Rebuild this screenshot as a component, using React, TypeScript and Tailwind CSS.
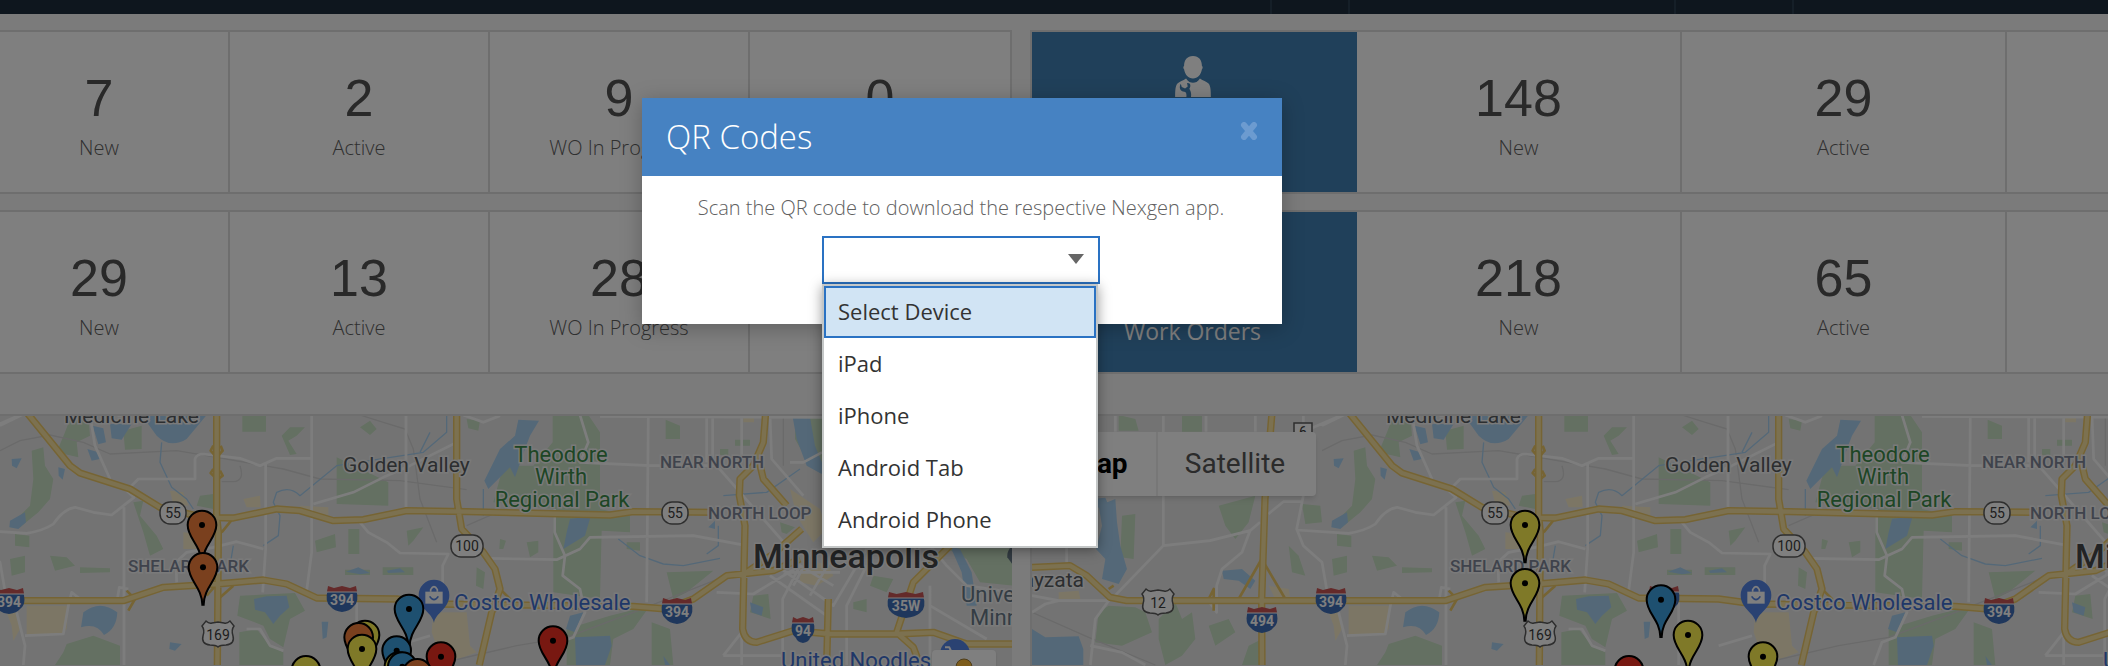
import React from "react";

type Stat = { value?: string; label?: string };

const navDividers = ["w-[1272px]", "w-[78px]", "w-[326px]", "w-[118px]"];

const rows: { left: Stat[]; right: Stat[]; title?: string }[] = [
  {
    left: [
      { value: "7", label: "New" },
      { value: "2", label: "Active" },
      { value: "9", label: "WO In Progress" },
      { value: "0" },
    ],
    right: [{ value: "148", label: "New" }, { value: "29", label: "Active" }, {}],
  },
  {
    left: [
      { value: "29", label: "New" },
      { value: "13", label: "Active" },
      { value: "28", label: "WO In Progress" },
      {},
    ],
    right: [{ value: "218", label: "New" }, { value: "65", label: "Active" }, {}],
    title: "Work Orders",
  },
];

function TechnicianIcon() {
  return (
    <svg viewBox="0 0 108 124" className="h-[41px] w-9 fill-white" aria-hidden="true">
      <path d="M54 0C36 0 27 13 27 30c-3 0-3 8 0 10 3 17 13 28 27 28s24-11 27-28c3-2 3-10 0-10C81 13 72 0 54 0Z" />
      <path d="M33 68c6 10 14 13 21 13s15-3 21-13c9 7 20 9 26 15 7 8 7 25 7 41H0c0-16 0-33 7-41 6-6 17-8 26-15Z" />
      <path
        d="M17 84C10 96 16 108 28 108C34 109 35 116 34 124H48C50 112 46 104 43 99C49 90 46 80 36 82L38 92L30 98L20 94Z"
        className="fill-[#4080b4]"
      />
    </svg>
  );
}

function StatCell({ value, label }: Stat) {
  return (
    <div className="flex h-40 flex-col items-center border-r-2 border-[#dcdcdc] bg-white pt-10 last:border-r-0">
      <span className="font-['Liberation_Sans',Arial,sans-serif] text-[52px] leading-[52px] text-[#525252]">{value}</span>
      <span className="mt-2 text-xl leading-8 font-light text-[#606060]">{label}</span>
    </div>
  );
}

function StatRow({ stats, title, columns }: { stats: Stat[]; title?: string; columns: string }) {
  return (
    <section className={`grid border-2 border-[#dcdcdc] ${columns}`}>
      <div className="flex h-40 flex-col items-center bg-[#4080b4] pt-6 pr-1">
        <TechnicianIcon />
        <span className="mt-[38px] text-[23px] leading-8 text-white">{title}</span>
      </div>
      {stats.map((s, i) => (
        <StatCell key={i} {...s} />
      ))}
    </section>
  );
}

const parks = [
  "M215 48L265 48L270 110L230 130L235 175L170 160L195 100Z",
  "M727 48H798V98H727Z",
  "M870 85L915 85L890 110L865 125L890 165L870 168L845 110Z",
  "M1080 85L1110 65L1130 90L1110 108Z",
  "M1010 175L1165 250L1165 320L1010 315Z",
  "M370 95L425 80V150L375 152Z",
  "M95 155L130 145L135 200L160 240L150 300L115 340L60 385L40 370L90 320L100 240Z",
  "M45 405L88 410V445L45 440Z",
  "M30 480L75 470V520L35 530Z",
  "M240 505L330 508V520L240 522Z",
  "M400 310L430 305L420 350L470 410L490 450L450 470L430 400Z",
  "M600 290L640 285V330L590 320Z",
  "M945 425L1005 405L1008 445L950 460Z",
  "M1045 390H1078V465H1045Z",
  "M1220 395L1270 385L1240 425L1225 440Z",
  "M720 590L885 582L915 635L870 660L850 745L810 720L790 680L712 650Z",
  "M718 700L770 690L810 740L850 760V798H718Z",
  "M190 760L200 735L280 710L360 740V798H165Z",
  "M1035 512H1110V528H1035Z",
  "M1148 505H1240V528H1148Z",
  "M1400 60L1440 65L1435 95L1405 88Z",
  "M1658 48H1765L1800 100L1800 330L1890 350L1890 400L1805 395L1800 600L1660 580L1660 330L1480 310L1510 200L1600 200L1658 130Z",
  "M1997 62L2040 80V120H1997Z",
  "M2205 122H2250V140H2205Z",
  "M2160 150H2185V168H2160Z",
  "M2385 48H2480V230L2430 200L2385 120Z",
  "M1500 420L1518 425L1510 450H1498Z",
  "M1580 430L1615 425V460L1590 475Z",
  "M1430 505L1455 520L1450 570L1428 560Z",
  "M1880 430H1920V455L1880 450Z",
  "M2000 520L2140 515L2060 580L2020 600Z",
  "M1700 690L1830 650L1950 620L1900 690L1840 720L1830 798H1700Z",
  "M1955 670L2010 690L2020 798H1955Z",
  "M2260 590L2305 585L2312 660L2250 640Z",
  "M2340 370L2385 385L2360 405L2345 400Z",
  "M2620 530L2680 540L2660 580L2610 560Z",
  "M2840 448H3040V560L2940 550L2900 480Z",
  "M2560 610L2600 600V640L2560 630Z",
  "M-610 48L-560 60L-550 95H-610Z",
  "M-420 48H-360V98H-420Z",
  "M-310 320L-200 290L-220 370L-260 420L-290 380Z",
  "M-600 350L-560 345L-565 480L-605 475Z",
  "M-100 440L-70 470L-50 530L-90 520Z",
  "M-670 640L-640 620L-560 625L-530 640L-510 700L-600 740L-680 730Z",
  "M-490 660L-440 610L-420 660L-390 640L-380 720L-420 770L-470 798L-490 720Z",
  "M-340 680L-280 660L-260 700L-320 740Z",
  "M-220 740L-180 720V798H-240Z",
  "M-60 315L-5 320L0 370L-50 375Z",
  "M150 470L200 475L225 500L165 515Z",
];

const waters = [
  "M425 48L470 110Q510 150 560 120L620 48Z",
  "M330 75L395 75L365 122L335 118Z",
  "M278 80L310 88L318 130L295 136Z",
  "M262 150L295 160L300 180L275 185Z",
  "M35 180L65 178L50 208L36 200Z",
  "M175 205L195 210L188 242L176 230Z",
  "M30 365L75 340L78 370L55 390L28 385Z",
  "M250 640Q300 600 352 640Q350 690 312 708Q290 670 243 685Z",
  "M762 600L800 592L860 590L868 625L840 650L820 675L795 640L765 632Z",
  "M510 730L545 735L525 755L508 750Z",
  "M965 668L985 668L980 715L968 720Z",
  "M1555 62L1617 65L1590 110L1575 150L1545 235L1530 205L1465 270L1453 245L1500 150L1545 110Z",
  "M1710 360L1772 352L1755 410L1690 450L1700 400Z",
  "M1725 715L1830 710L1835 740L1815 798H1728Z",
  "M1710 650L1750 640L1725 700L1698 690Z",
  "M2378 55L2430 55L2445 140L2470 200L2465 225L2420 200L2390 120Z",
  "M2850 440L2880 450L2915 520L2930 620L2900 620L2885 520Z",
  "M2250 610L2290 625L2285 650L2255 640Z",
  "M1038 518L1075 505L1110 522L1080 526Z",
  "M1160 515L1200 508L1215 520L1165 522Z",
  "M-670 320L-620 300L-615 370L-605 440L-585 510L-610 555L-660 540L-650 480L-678 450L-660 380Z",
  "M-870 690L-830 715L-730 712L-716 750V798H-870Z",
  "M-300 515L-240 510L-200 545L-215 570L-250 545L-295 540Z",
  "M-690 300L-650 296L-640 320L-660 340Z",
  "M1990 770L2010 798H1995Z",
  "M2125 385L2145 365V390Z",
];

const beiges = [
  "M80 620L205 620L200 690L185 705L80 708Z",
  "M510 275L550 280L565 320L520 315Z",
  "M730 300L780 290L782 325L740 325Z",
  "M900 320L985 325V348L900 340Z",
  "M550 400L600 405L590 450L550 450Z",
  "M20 640L50 640L60 690L40 725L35 680Z",
  "M1300 640L1400 640L1410 740L1430 760L1330 798L1295 700Z",
  "M-160 560L-100 570L-95 600L-140 600Z",
  "M-790 580L-730 575L-725 600L-790 600Z",
  "M2400 500L2480 490L2500 530L2450 560L2400 550Z",
  "M2370 270L2460 330L2480 390L2440 430L2390 350Z",
  "M2230 50H2262V70H2230Z",
];

const whiteRoads = [
  "M935 48V460L920 575",
  "M797 195V450L788 580",
  "M-76 393L80 403Q130 395 160 375Q190 330 225 325L280 340L335 348L402 295L380 275L415 240H585V180Q590 165 610 165L720 178L780 200L830 178H935",
  "M270 48L285 140L330 240",
  "M0 80L65 48",
  "M372 325V798",
  "M1218 48V325",
  "M940 315L1060 280L1150 235L1230 200L1370 130",
  "M1080 370L1105 400L1160 430L1200 462L1345 465L1328 500V560",
  "M530 550L528 490L560 460L640 445L710 428L790 450",
  "M-56 290L-76 390L-56 440L0 490L14 570",
  "M50 640L75 740L70 798M75 710L190 705L205 620L215 580L240 600",
  "M352 600L358 565L385 570",
  "M1460 478L1670 482L1740 450L1770 415L2080 410L2240 440",
  "M1945 48L1940 610",
  "M1740 48L1765 130L1740 190L1950 200H2150L2290 360L2360 440",
  "M1664 330V400L1695 470L1688 530L1740 570L1755 640L1720 715L1680 730L1655 798",
  "M1390 48L1450 70L1500 50M1800 52L2480 55",
  "M2120 48V190M2138 48V190M2225 48V190",
  "M2310 48L2315 180L2410 290M2370 190H2410L2466 160",
  "M2150 580L2260 585L2400 500",
  "M2170 770H2350M2170 770L2225 700V798",
  "M2348 798V600L2400 500L2500 560",
  "M2330 500L2500 620L2600 450M2310 530L2480 650M2380 560L2440 450M2430 590L2500 470M2350 520L2520 520",
  "M2540 798V620L2600 500",
  "M2790 440L2840 500L2900 560L3036 580M2790 560V798M2790 620L2960 720",
  "M740 690H780L810 740L850 755",
  "M1070 600V798M1190 740L1290 710",
  "M-766 440V495M-476 48V440",
  "M-621 590L-476 440L-336 425L-216 395L-186 370",
  "M-216 395L-240 460L-300 510L-316 560V640L-345 600",
  "M-161 345L-116 308H-56",
  "M-870 590L-790 605H-640L-680 660L-695 798",
  "M-870 640L-830 615L-790 605M-695 740L-600 760L-530 798",
  "M-620 48V98M-348 48V98M-200 48V98M-56 48V98L60 48",
];

const rails = [
  "M0 155L60 125L150 108L250 130L330 165L530 155L620 170L850 210L960 240L1200 245L1400 272",
  "M720 200Q735 245 700 248H665M1080 48L1150 70L1215 90L1240 150L1260 300L1310 430",
  "M1400 380L1560 310M2350 48V200M1300 798L1550 740L1700 715L1900 640L2180 530",
  "M-870 640L-700 715L-500 798",
];

const streams = [
  "M485 130L480 190L515 265L560 300L580 330",
  "M1340 48V100L1270 160L1010 200L900 290Q870 260 830 280L820 310L840 350L835 410L790 440",
  "M1290 100L1260 160M1855 420L1920 470L1990 495L2050 500L2160 478",
  "M2170 290L2300 280L2400 210M2155 380V440L2120 465M1450 270V350M700 440L690 500",
];

const highways = [
  "M-870 505L-756 500L-706 530L-636 595L-586 605H370L490 565L650 555L790 543L860 555L950 597L1190 600L1300 615L1900 622L2000 630L2080 600L2180 530L2320 515L2400 480",
  "M80 40L210 200L240 222L390 270L480 325L610 355L700 357L830 330L900 335L1000 365L1090 362L1220 335L1400 338L1700 345L1830 348L1900 338L2160 340",
  "M650 40V350L655 400L652 798",
  "M1370 40V300L1385 390L1450 460L1485 510L1500 570L1475 640L1438 798",
  "M-150 40L-171 300L-181 605L-180 798",
  "M2297 40L2290 130L2260 200L2220 240L2218 290L2235 380L2228 690Q2235 730 2270 730L2380 695L2490 705H2690L2800 700L2900 735H3036",
  "M2278 190L2290 240L2360 320M2405 390L2320 465L2240 520",
  "M2850 440L2740 550L2710 640L2690 700L2740 745L2760 798M2485 600L2480 798",
];

const ramps = [
  "M-181 480L-250 600M-181 480L-110 600M655 550L620 590M655 600L700 560M700 357L665 400",
  "M380 575L405 600L385 635M1480 640L1530 600L1490 560M-640 570L-625 560M-340 600L-325 570V635",
  "M640 140L632 155L645 170M662 140L668 155L655 170M640 210L632 222L645 235M660 215L668 230L655 240",
];

type Point = [number, number];

function Interstate({ at: [x, y], children, w = 16 }: { at: Point; children: string; w?: number }) {
  return (
    <g transform={`translate(${x} ${y})`}>
      <path
        d={`M${-w + 2} -10H${w - 2}Q${w + 2} 3 ${w - 5} 8Q${w / 2} 12 0 13Q${-w / 2} 12 ${-w + 5} 8Q${-w - 2} 3 ${-w + 2} -10Z`}
        fill="#3f6fb8"
      />
      <path d={`M${-w + 1} -7L${-w + 2} -13L${-w / 2} -11L0 -13L${w / 2} -11L${w - 2} -13L${w - 1} -7Z`} fill="#c95555" />
      <path d={`M${-w + 1} -7H${w - 1}`} stroke="#fff" strokeWidth="1" />
      <text y="6" textAnchor="middle" className="fill-white text-[14px] font-bold">
        {children}
      </text>
    </g>
  );
}

function StateRoute({ at: [x, y], children, w = 26 }: { at: Point; children: string; w?: number }) {
  return (
    <g transform={`translate(${x} ${y})`}>
      <rect x={-w / 2} y="-11" width={w} height="22" rx="10" className="fill-white stroke-[#5c5c5c]" strokeWidth="1.5" />
      <text y="5" textAnchor="middle" className="fill-[#3c3c3c] text-[14px]">
        {children}
      </text>
    </g>
  );
}

function UsRoute({ at: [x, y], children }: { at: Point; children: string }) {
  return (
    <g transform={`translate(${x} ${y})`}>
      <path
        d="M-12 -13Q-9 -10 -6 -11L0 -12L6 -11Q9 -10 12 -13L16 -8Q13 -4 15 2Q17 10 8 11Q2 11 0 13Q-2 11 -8 11Q-17 10 -15 2Q-13 -4 -16 -8Z"
        className="fill-white stroke-[#5c5c5c]"
        strokeWidth="1.5"
      />
      <text y="6" textAnchor="middle" className="fill-[#3c3c3c] text-[14px]">
        {children}
      </text>
    </g>
  );
}

const pinColors = { orange: "#f4803c", yellow: "#fff250", blue: "#3ca0e0", red: "#f03022" };
type Pin = [keyof typeof pinColors, number, number];

const leftPins: Pin[] = [
  ["orange", 606, 378],
  ["orange", 609, 505],
  ["yellow", 1095, 708],
  ["orange", 1076, 715],
  ["yellow", 1086, 750],
  ["blue", 1227, 630],
  ["blue", 1190, 755],
  ["yellow", 1197, 803],
  ["blue", 1207, 803],
  ["red", 1323, 773],
  ["orange", 1252, 823],
  ["yellow", 918, 814],
  ["red", 1659, 725],
];

const rightPins: Pin[] = [
  ["yellow", 609, 378],
  ["yellow", 609, 553],
  ["blue", 1017, 602],
  ["yellow", 1098, 708],
  ["red", 921, 814],
  ["yellow", 1323, 773],
];

function CityMap({ pins, label }: { pins: Pin[]; label: string }) {
  const halo = "stroke-[#f4f4f4] [paint-order:stroke] [stroke-width:3px]";
  return (
    <svg role="img" aria-label={label} className="block h-[250px] w-full bg-[#e7e7e7] font-[Roboto,sans-serif]">
      <g transform="translate(290 -17)">
        <g transform="scale(0.33333)" fill="none" strokeLinejoin="round">
          <path d={parks.join("")} fill="#c8e0c4" />
          <path d={beiges.join("")} fill="#f8edcb" />
          <path d={waters.join("")} fill="#a9d1f0" />
          <path d={rails.join("")} stroke="#d4d4d4" strokeWidth="4" />
          <path d={streams.join("")} stroke="#a9d1f0" strokeWidth="4" />
          <path d={whiteRoads.join("")} stroke="#fbfbfb" strokeWidth="8" />
          <path d={ramps.join("")} stroke="#edc968" strokeWidth="8" />
          <path d={highways.join("")} stroke="#edc968" strokeWidth="22" />
          <path d={highways.join("")} stroke="#f8e3a0" strokeWidth="13" />
          <g transform="translate(1302 590)">
            <path d="M0 82C-5 50 -46 40 -46 -2A46 46 0 1 1 46 -2C46 40 5 50 0 82Z" fill="#5585e5" />
            <path d="M-26 -12H26V24H-26Z" fill="#fff" />
            <path d="M-10 -12V-18Q0 -36 10 -18V-12" stroke="#fff" strokeWidth="5" />
            <path d="M-13 2Q0 22 13 2" stroke="#5585e5" strokeWidth="5" />
          </g>
          <circle cx="2865" cy="765" r="45" fill="#5585e5" />
          <path d="M2835 745H2848L2856 762H2895L2888 775H2855" stroke="#fff" strokeWidth="6" />
          <path d="M3040 440Q3020 450 3022 475L3040 500Z" fill="#657784" />
        </g>
        <g className={halo}>
          <g className="fill-[#585c60] text-[21px]">
            <text x="64" y="24">Medicine Lake</text>
            <text x="343" y="73">Golden Valley</text>
            <text x="-238" y="188" textAnchor="end">Wayzata</text>
          </g>
          <g className="fill-[#3c8c4a] text-[22px]" textAnchor="middle">
            <text x="561" y="63">Theodore</text>
            <text x="561" y="85">Wirth</text>
            <text x="562" y="108">Regional Park</text>
          </g>
          <g className="fill-[#7f8698] text-[17px] font-medium">
            <text x="660" y="69">NEAR NORTH</text>
            <text x="708" y="120">NORTH LOOP</text>
            <text x="128" y="173">SHELARD PARK</text>
          </g>
          <text x="753" y="169" className="fill-[#444648] text-[34px] font-medium">Minneapolis</text>
          <g className="fill-[#687a88] text-[22px]">
            <text x="961" y="203">University of</text>
            <text x="970" y="226">Minnesota</text>
          </g>
          <g className="fill-[#3f6fd0] text-[22px]">
            <text x="454" y="211">Costco Wholesale</text>
            <text x="781" y="269">United Noodles</text>
          </g>
        </g>
        <Interstate at={[9, 202]}>394</Interstate>
        <Interstate at={[342, 200]}>394</Interstate>
        <Interstate at={[677, 212]}>394</Interstate>
        <Interstate at={[803, 231]} w={12}>94</Interstate>
        <Interstate at={[906, 206]} w={19}>35W</Interstate>
        <Interstate at={[-60, 221]}>494</Interstate>
        <StateRoute at={[173, 114]}>55</StateRoute>
        <StateRoute at={[675, 114]}>55</StateRoute>
        <StateRoute at={[467, 147]} w={32}>100</StateRoute>
        <UsRoute at={[218, 235]}>169</UsRoute>
        <UsRoute at={[-164, 203]}>12</UsRoute>
        <rect x="-28" y="24" width="18" height="16" className="fill-white stroke-[#5c5c5c]" strokeWidth="1.5" />
        <text x="-19" y="38" textAnchor="middle" className="fill-[#3c3c3c] text-[14px]">6</text>
        <g transform="scale(0.33333)">
          {pins.map(([color, x, y], i) => (
            <g key={i} transform={`translate(${x} ${y})`}>
              <path
                d="M-2 112C-3 60 -43 40 -43 0A43 43 0 1 1 43 0C43 40 3 60 2 112Z"
                fill={pinColors[color]}
                stroke="#000"
                strokeWidth="6"
              />
              <circle r="9" fill="#000" />
            </g>
          ))}
        </g>
      </g>
    </svg>
  );
}

const devices = ["Select Device", "iPad", "iPhone", "Android Tab", "Android Phone"];

function QrDialog() {
  return (
    <div role="dialog" aria-labelledby="qr-title" className="w-[640px] self-start bg-white shadow-[0_4px_20px_rgba(0,0,0,0.25)]">
      <header className="flex h-[78px] items-start justify-between bg-[#4682c2] px-6">
        <h2 id="qr-title" className="pt-4 text-[33px] leading-[46px] font-light text-white">
          QR Codes
        </h2>
        <button type="button" aria-label="Close" className="mt-6 text-[#6c9bd0]">
          <svg viewBox="0 0 18 18" className="size-[18px]" aria-hidden="true">
            <path d="M4 3L14 15M14 3L4 15" stroke="currentColor" strokeWidth="6" strokeLinecap="round" />
          </svg>
        </button>
      </header>
      <div className="flex h-[148px] flex-col items-center pt-4 pr-0.5">
        <label htmlFor="device" className="text-xl leading-8 font-light text-[#606060]">
          Scan the QR code to download the respective Nexgen app.
        </label>
        <div className="relative mt-3 w-[278px]">
          <select
            id="device"
            defaultValue=""
            className="block h-12 w-full appearance-none border-2 border-[#2a72c3] bg-white px-3 text-[22px] text-[#333]"
          >
            <option value="" label=" " />
            {devices.slice(1).map((d) => (
              <option key={d}>{d}</option>
            ))}
          </select>
          <svg viewBox="0 0 16 10" className="pointer-events-none absolute top-[18px] right-4 h-[10px] w-4 fill-[#666]" aria-hidden="true">
            <path d="M0 0H16L8 10Z" />
          </svg>
          <ul
            role="listbox"
            aria-label="Device"
            className="absolute top-full left-0 w-[276px] border-2 border-[#c4c7c7] bg-white text-[22px] leading-[50px] text-[#333] shadow-[0_2px_12px_rgba(0,0,0,0.4)]"
          >
            {devices.map((d, i) => (
              <li
                key={d}
                role="option"
                aria-selected={i === 0}
                className={
                  i === 0
                    ? "h-[52px] border-2 border-[#2a72c3] bg-[#d1e4f4] px-3 leading-[46px]"
                    : "h-[52px] px-[14px]"
                }
              >
                {d}
              </li>
            ))}
          </ul>
        </div>
      </div>
    </div>
  );
}

export default function App() {
  return (
    <div className="relative min-h-screen overflow-hidden bg-[#f7f7f7] font-['Open_Sans',sans-serif]">
      <nav className="flex h-[14px] bg-[#1c2c3c]">
        {navDividers.map((w) => (
          <span key={w} className={`shrink-0 border-r-2 border-[#2a3f50] ${w}`} />
        ))}
      </nav>
      <main className="-mr-[226px] -ml-[292px] pt-4">
        <div className="flex flex-col gap-4">
          {rows.map((row, i) => (
            <div key={i} className="grid grid-cols-2 gap-[18px]">
              <StatRow stats={row.left} columns="grid-cols-5" />
              <StatRow stats={row.right} title={row.title} columns="grid-cols-4" />
            </div>
          ))}
        </div>
        <div className="mt-10 grid grid-cols-2 gap-[18px]">
          <div className="relative overflow-hidden border-t-2 border-l-2 border-[#dcdcdc]">
            <CityMap pins={leftPins} label="Service requests map" />
            <button
              type="button"
              aria-label="Street View"
              className="absolute right-4 -bottom-12 flex size-16 justify-center rounded-sm bg-white pt-2 shadow"
            >
              <svg viewBox="0 0 20 40" className="h-10 w-5" aria-hidden="true">
                <circle cx="10" cy="9" r="8" fill="#fbb836" stroke="#9a7a36" />
                <path d="M3 18H17V34H3Z" fill="#fbb836" />
              </svg>
            </button>
          </div>
          <div className="relative overflow-hidden border-t-2 border-l-2 border-[#dcdcdc]">
            <CityMap pins={rightPins} label="Work orders map" />
            <div className="absolute top-4 left-4 flex h-16 rounded-sm bg-white font-[Roboto,sans-serif] text-[28px] shadow-md">
              <button type="button" className="w-[110px] border-r-2 border-[#eee] pr-1 font-bold text-black">
                Map
              </button>
              <button type="button" className="w-[158px] pr-1 text-[#565656]">
                Satellite
              </button>
            </div>
          </div>
        </div>
      </main>
      <div className="absolute inset-0 flex justify-center bg-black/50 pt-[98px] pr-[184px]">
        <QrDialog />
      </div>
    </div>
  );
}
